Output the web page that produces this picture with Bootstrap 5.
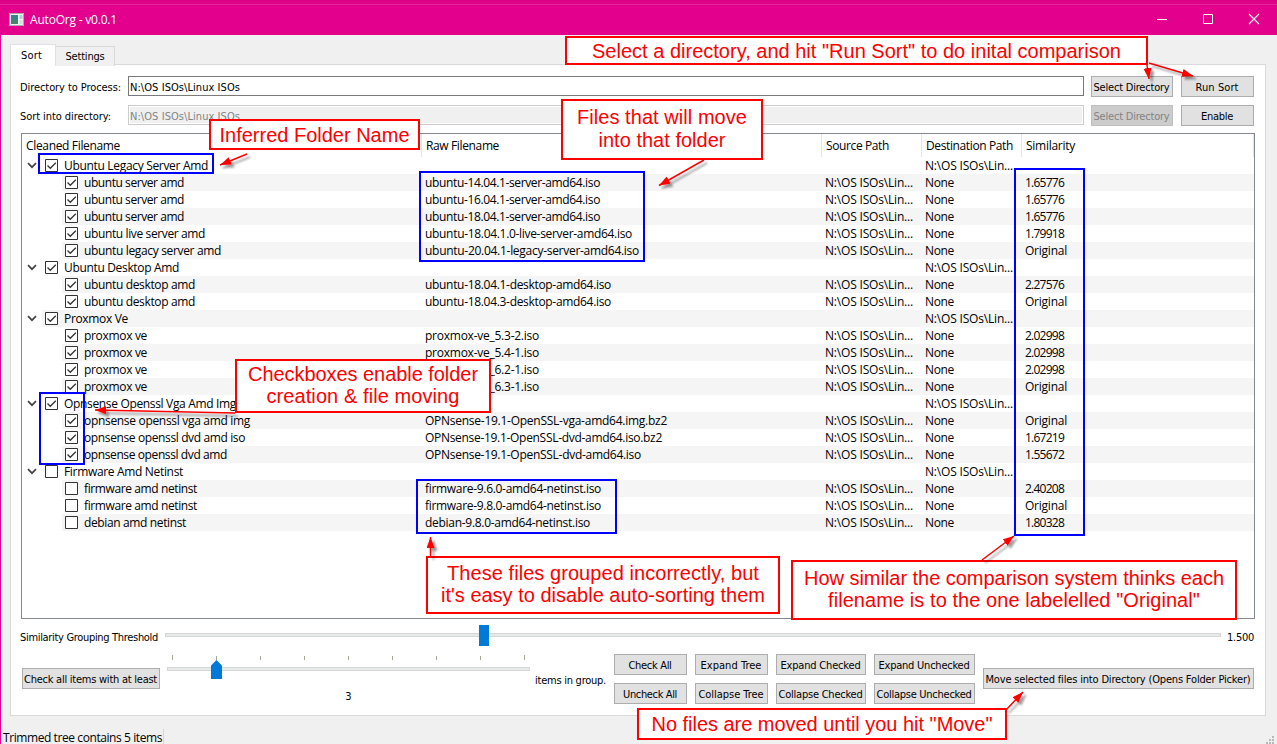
<!DOCTYPE html>
<html lang="en">
<head>
<meta charset="utf-8">
<meta name="viewport" content="width=device-width, initial-scale=1">
<title>AutoOrg - v0.0.1</title>
<link href="https://cdn.jsdelivr.net/npm/bootstrap@5.3.0/dist/css/bootstrap.min.css" rel="stylesheet">
<style>
html,body{height:100%}
body{margin:0;overflow:hidden;background:#f0f0f0;color:#000;font:12px/17px "Open Sans","Noto Sans",sans-serif;position:relative}
.ui{font-family:"DejaVu Sans Condensed","DejaVu Sans",sans-serif;font-stretch:condensed;font-size:11px}
[data-w]{white-space:pre;display:inline-block}
.window{height:744px;border-left:1px solid #e3008c}
.titlebar{height:35px;background:#e3008c;color:#fff;margin-left:-1px;padding:4px 0 0 9px;box-shadow:inset 0 4px #dc0087,inset 0 5px #e6239a}
.titlebar .caption{margin-left:6px}
.winctl{gap:34px;margin-right:17px}
.main-tabs{height:30px;padding:9px 0 0 9px;border:0;align-items:flex-end;position:relative}
.main-tabs .nav-link{border:1px solid #d9d9d9;border-radius:0;margin:0;padding:0;color:#000;background:#f0f0f0;text-align:center;line-height:17px}
.main-tabs .nav-link.active{width:46px;height:22px;background:#fff;border-bottom:0;margin-bottom:-1px;padding-top:2px;padding-right:3px;color:#000}
.main-tabs .settings{width:59px;height:20px;border-left:0!important;border-bottom:0!important;padding-top:1px!important;margin-bottom:-1px}
.pane{margin:-1px 11px 0 9px;height:653px;border:1px solid #d9d9d9;background:#fff;padding:11px 11px 0 9px}
.formrow{height:21px;margin-bottom:8px}
.formrow .lab{width:108px;height:21px;line-height:21px;padding-top:1px}
.form-control.path{height:20px;border:1px solid #7a7a7a;border-radius:0;padding:2px 1px 0;line-height:18px;min-height:0;color:#000;width:956px;background:#fff}
.form-control.path.off{background:#f0f0f0;border-color:#ccc;color:#838383;box-shadow:inset 0 0 0 1px #fff}
.btn.win{height:21px;border:1px solid #adadad;background:#e1e1e1;border-radius:0;padding:2px 0 0;line-height:17px;font-size:11px;color:#000;display:flex;justify-content:center;align-items:center;flex:none}
.btn.win [data-w]{margin-left:-1px}
.btn.win.off{background:#ccc;border-color:#bfbfbf;color:#838383}
.w82{width:82px}.w73{width:73px}.w271{width:271px}.w138{width:138px}
.tree{width:1234px;height:486px;border:1px solid #828790;margin:-1px 0 0 1px}
.grid5{display:grid;grid-template-columns:400px 400px 100px 100px 1fr}
.head{height:23px}
.head>div{border-right:1px solid #e5e5e5;padding:3px 0 0 4px}
.trow{height:17px}
.trow>div{padding-left:3px;height:17px;line-height:17px}
.trow>div:first-child{padding-left:0;margin-left:20px;display:flex}
.trow.child>div:first-child{margin-left:40px}
.trow.alt>div{background:#f5f5f5}
.box{width:13px;height:13px;margin:2px 6px 0 3px;flex:none;display:block}
.trow .chev{width:10px;height:7px;margin:5px -10px 0 0;position:relative;left:-15px;flex:none}
.thr{height:35px;padding-top:5px}
.thr>span{margin-top:5px}
.groove{height:4px;border:1px solid #d6d6d6;background:#e7eaea;position:relative}
.thr .groove{width:1056px;margin:9px 6px 0 7px}
.knob{position:absolute;left:313px;top:-9px;width:10px;height:21px;background:#007ad9}
.bottom{height:50px}
.bottom .first{margin-left:2px}
.bottom .label{margin:4px 8px 0 5px}
.actions{grid-template-columns:73px 73px 90px 101px}
.count{width:363px;margin-left:7px}
.count .value{margin-top:17px}
.ticks{height:5px;margin:1px 5px 0;display:flex;justify-content:space-between;align-items:flex-end}
.ticks i{width:1px;height:4px;background:#a7a69a}
.ticks i:first-child,.ticks i:last-child{height:5px}
.count .groove{margin-top:7px}
.pin{position:absolute;left:43px;top:-8px;width:11px;height:19px}
.statusbar{height:28px}
.statusbar .msg{width:161px;height:15px;margin:13px 0 0 2px;border-right:1px solid #d7d7d7}
/* annotations lying over the window */
.note{position:absolute;border:2px solid #f00;background:#fff;color:#f00;font:20px/22px "Liberation Sans",Arial,sans-serif;text-align:center;display:flex;flex-direction:column;align-items:center;justify-content:center}
.n1{left:565px;top:36px;width:583px;height:29px}
.n2{left:561px;top:99px;width:202px;height:61px;padding-bottom:3px}
.n2 span+span{margin-top:1px}
.n3{left:209px;top:119px;width:211px;height:31px}
.n4{left:235px;top:359px;width:256px;height:54px;padding-bottom:2px}
.n5{left:426px;top:556px;width:354px;height:58px;padding-bottom:2px}
.n6{left:791px;top:560px;width:446px;height:60px;padding-bottom:2px}
.n7{left:637px;top:708px;width:370px;height:32px}
.marks{position:absolute;left:0;top:0;pointer-events:none}
</style>
</head>
<body>
<div class="window d-flex flex-column">
  <header class="titlebar d-flex align-items-center">
    <svg width="15" height="13" viewBox="0 0 15 13"><path d="M0 0h15v13H0z" fill="#f4f4f4"/><path d="M.5 .5h14v12H.5z" fill="none" stroke="#a9a9a9"/><path d="M2 2h7v9H2z" fill="#35818c"/><path d="M2 7h7v4H2z" fill="#3f8765"/><path d="M10.5 2h3v4h-3z" fill="#b8c8d8"/><path d="M10.5 7h3v4h-3z" fill="#d5dce2"/></svg>
    <span class="caption" data-w="87">AutoOrg - v0.0.1</span>
    <div class="winctl d-flex align-items-center ms-auto">
      <svg width="12" height="12"><path d="M1 6.5h10" stroke="#fff"/></svg>
      <svg width="12" height="12"><path d="M1.500 1.500h9v9h-9z" fill="none" stroke="#fff"/></svg>
      <svg width="12" height="12"><path d="M1 1l10 10M11 1L1 11" stroke="#fff" stroke-width="1.100"/></svg>
    </div>
  </header>
  <nav class="nav nav-tabs main-tabs ui">
    <a class="nav-link active"><span data-w="21">Sort</span></a>
    <a class="nav-link settings"><span data-w="39">Settings</span></a>
  </nav>
  <main class="pane">
    <div class="formrow d-flex ui">
      <label class="lab"><span data-w="101">Directory to Process:</span></label>
      <div class="form-control path ui"><span data-w="110">N:\OS ISOs\Linux ISOs</span></div>
      <button class="btn win w82 ui ms-auto"><span data-w="76">Select Directory</span></button>
      <button class="btn win w73 ui ms-2"><span data-w="43">Run Sort</span></button>
    </div>
    <div class="formrow d-flex ui">
      <label class="lab"><span data-w="91">Sort into directory:</span></label>
      <div class="form-control path off ui"><span data-w="110">N:\OS ISOs\Linux ISOs</span></div>
      <button class="btn win off w82 ui ms-auto"><span data-w="76">Select Directory</span></button>
      <button class="btn win w73 ui ms-2"><span data-w="32">Enable</span></button>
    </div>
    <section class="tree" id="tree">
      <div class="head grid5">
        <div><span data-w="94">Cleaned Filename</span></div>
        <div><span data-w="73">Raw Filename</span></div>
        <div><span data-w="63">Source Path</span></div>
        <div><span data-w="87">Destination Path</span></div>
        <div><span data-w="49">Similarity</span></div>
      </div>
    </section>
    <div class="thr d-flex ui">
      <span data-w="138">Similarity Grouping Threshold</span>
      <div class="groove"><div class="knob"></div></div>
      <span data-w="27">1.500</span>
    </div>
    <div class="bottom d-flex ui">
      <button class="btn win w138 ui first align-self-center"><span data-w="133">Check all items with at least</span></button>
      <div class="count">
        <div class="ticks"><i></i><i></i><i></i><i></i><i></i><i></i><i></i><i></i><i></i></div>
        <div class="groove"><svg class="pin" viewBox="0 0 11 19"><path d="M0 19V5.500L5.500 0 11 5.500V19z" fill="#007ad9"/></svg></div>
        <div class="value text-center">3</div>
      </div>
      <span class="label align-self-center" data-w="71">items in group.</span>
      <div class="actions d-grid gap-2">
        <button class="btn win ui"><span data-w="43">Check All</span></button>
        <button class="btn win ui"><span data-w="61">Expand Tree</span></button>
        <button class="btn win ui"><span data-w="80">Expand Checked</span></button>
        <button class="btn win ui"><span data-w="91">Expand Unchecked</span></button>
        <button class="btn win ui"><span data-w="54">Uncheck All</span></button>
        <button class="btn win ui"><span data-w="65">Collapse Tree</span></button>
        <button class="btn win ui"><span data-w="84">Collapse Checked</span></button>
        <button class="btn win ui"><span data-w="95">Collapse Unchecked</span></button>
      </div>
      <button class="btn win w271 ui ms-2 align-self-center"><span data-w="265">Move selected files into Directory (Opens Folder Picker)</span></button>
    </div>
  </main>
  <footer class="statusbar d-flex justify-content-between">
    <div class="msg"><span data-w="159">Trimmed tree contains 5 items</span></div>
    <svg class="align-self-end" width="12" height="8"><path d="M7 0h2v2H7zM4 3h2v2H4zM7 3h2v2H7zM1 6h2v2H1zM4 6h2v2H4zM7 6h2v2H7z" fill="#b8b8b8"/></svg>
  </footer>
</div>

<div class="note n1"><span data-w="529">Select a directory, and hit "Run Sort" to do inital comparison</span></div>
<div class="note n2"><span data-w="170">Files that will move</span><span data-w="127">into that folder</span></div>
<div class="note n3"><span data-w="190">Inferred Folder Name</span></div>
<div class="note n4"><span data-w="230">Checkboxes enable folder</span><span data-w="193">creation &amp; file moving</span></div>
<div class="note n5"><span data-w="312">These files grouped incorrectly, but</span><span data-w="324">it's easy to disable auto-sorting them</span></div>
<div class="note n6"><span data-w="420">How similar the comparison system thinks each</span><span data-w="372">filename is to the one labelelled "Original"</span></div>
<div class="note n7"><span data-w="341">No files are moved until you hit "Move"</span></div>
<svg class="marks" width="1277" height="744">
  <defs>
    <marker id="tip" markerUnits="userSpaceOnUse" markerWidth="12" markerHeight="8" refX="11" refY="4" orient="auto"><path d="M0 0l11 4-11 4z" fill="#f00"/></marker>
    <filter id="sh" filterUnits="userSpaceOnUse" x="0" y="0" width="1277" height="744"><feDropShadow dx="3" dy="3" stdDeviation="1.300" flood-color="#000" flood-opacity=".4"/></filter>
  </defs>
  <g fill="none" stroke="#00f" stroke-width="2">
    <path d="M39 154h174v19H39zM420 172h224v89H420zM417 480h199v53H417zM40 393h44v71H40zM1015 169h69v366h-69z"/>
  </g>
  <g stroke="#f00" stroke-width="1.500" fill="none" filter="url(#sh)">
    <path d="M247 154L220 165" marker-end="url(#tip)"/>
    <path d="M704 160L659 185.500" marker-end="url(#tip)"/>
    <path d="M1147 65L1149 79" marker-end="url(#tip)"/>
    <path d="M1149 63L1193 76" marker-end="url(#tip)"/>
    <path d="M235 413L95 410" marker-end="url(#tip)"/>
    <path d="M430.500 557V537" marker-end="url(#tip)"/>
    <path d="M982 560L1014 536" marker-end="url(#tip)"/>
    <path d="M1006 710L1023 692" marker-end="url(#tip)"/>
  </g>
</svg>

<script src="https://cdn.jsdelivr.net/npm/bootstrap@5.3.0/dist/js/bootstrap.bundle.min.js"></script>
<script>
// Groups: [name, width, checked, files]; files: [cleaned, width, raw, width, similarity]
const groups = [
  ["Ubuntu Legacy Server Amd",144,1,[
    ["ubuntu server amd",100,"ubuntu-14.04.1-server-amd64.iso",175,"1.65776"],
    ["ubuntu server amd",100,"ubuntu-16.04.1-server-amd64.iso",175,"1.65776"],
    ["ubuntu server amd",100,"ubuntu-18.04.1-server-amd64.iso",175,"1.65776"],
    ["ubuntu live server amd",121,"ubuntu-18.04.1.0-live-server-amd64.iso",207,"1.79918"],
    ["ubuntu legacy server amd",137,"ubuntu-20.04.1-legacy-server-amd64.iso",214,"Original"]]],
  ["Ubuntu Desktop Amd",115,1,[
    ["ubuntu desktop amd",111,"ubuntu-18.04.1-desktop-amd64.iso",186,"2.27576"],
    ["ubuntu desktop amd",111,"ubuntu-18.04.3-desktop-amd64.iso",186,"Original"]]],
  ["Proxmox Ve",64,1,[
    ["proxmox ve",63,"proxmox-ve_5.3-2.iso",114,"2.02998"],
    ["proxmox ve",63,"proxmox-ve_5.4-1.iso",114,"2.02998"],
    ["proxmox ve",63,"proxmox-ve_6.2-1.iso",114,"2.02998"],
    ["proxmox ve",63,"proxmox-ve_6.3-1.iso",114,"Original"]]],
  ["Opnsense Openssl Vga Amd Img",172,1,[
    ["opnsense openssl vga amd img",166,"OPNsense-19.1-OpenSSL-vga-amd64.img.bz2",242,"Original"],
    ["opnsense openssl dvd amd iso",161,"OPNsense-19.1-OpenSSL-dvd-amd64.iso.bz2",237,"1.67219"],
    ["opnsense openssl dvd amd",143,"OPNsense-19.1-OpenSSL-dvd-amd64.iso",216,"1.55672"]]],
  ["Firmware Amd Netinst",119,0,[
    ["firmware amd netinst",113,"firmware-9.6.0-amd64-netinst.iso",176,"2.40208"],
    ["firmware amd netinst",113,"firmware-9.8.0-amd64-netinst.iso",176,"Original"],
    ["debian amd netinst",102,"debian-9.8.0-amd64-netinst.iso",165,"1.80328"]]]
];
const t = (s, w) => `<span data-w="${w}">${s}</span>`;
const box = on => `<svg class="box" viewBox="0 0 13 13"><path d="M.5 .5h12v12H.5z" fill="#fff" stroke="#333"/>${on ? '<path d="M2.500 6.500l2.800 2.800 5.500-5.500" fill="none" stroke="#333" stroke-width="1.300"/>' : ''}</svg>`;
const chev = '<svg class="chev" viewBox="0 0 10 7"><path d="M1 1.200l4 4 4-4" fill="none" stroke="#444" stroke-width="1.700"/></svg>';
const path = t("N:\\OS ISOs\\Lin...", 88);
let n = 0, html = "";
const row = (kind, cells) => html += `<div class="trow grid5 ${kind} ${n++ % 2 ? "alt" : ""}">${cells.map(c => `<div>${c}</div>`).join("")}</div>`;
for (const [name, w, on, files] of groups) {
  row("group", [chev + box(on) + t(name, w), "", "", path, ""]);
  for (const [clean, cw, raw, rw, sim] of files)
    row("child", [box(on) + t(clean, cw), t(raw, rw), path, t("None", 29), t(sim, sim === "Original" ? 42 : 39)]);
}
document.getElementById("tree").insertAdjacentHTML("beforeend", html);
// Track every label to its nominal width
document.querySelectorAll("[data-w]").forEach(e => {
  const natural = e.getBoundingClientRect().width;
  e.style.letterSpacing = (e.dataset.w - natural) / e.textContent.length + "px";
});
</script>
</body>
</html>
